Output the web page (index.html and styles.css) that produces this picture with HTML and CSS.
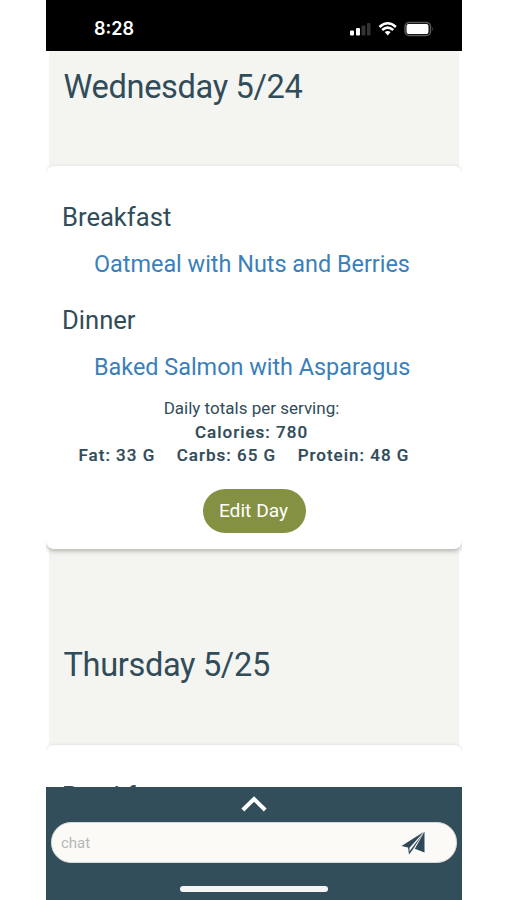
FILE: index.html
```html
<!DOCTYPE html>
<html lang="en">
<head>
    <meta charset="utf-8">
    <title>Meal Plan</title>
    <link rel="stylesheet" href="styles.css">
</head>
<body>
    <div class="phone">
        <header class="status-bar">
            <span class="time">8:28</span>
            <svg class="status-icons" width="86" height="16" viewBox="0 0 86 16">
                <g fill="#fff">
                    <rect x="2" y="9.500" width="4" height="5" rx="1"/>
                    <rect x="8" y="7" width="4" height="7.500" rx="1"/>
                    <rect x="13.500" y="4.500" width="4" height="10" rx="1" opacity=".2"/>
                    <rect x="19" y="2" width="3.500" height="12.500" rx="1" opacity=".2"/>
                    <path d="M36.700 11 L39.700 14.500 L42.700 11 Q39.700 9 36.700 11Z"/>
                    <rect x="58.500" y="3" width="22" height="10" rx="2"/>
                    <path d="M84.500 6 Q86 8 84.500 10Z" opacity=".45"/>
                </g>
                <g fill="none" stroke="#fff" stroke-width="2.500">
                    <path d="M31.500 6 Q39.700 -1.500 47.900 6"/>
                    <path d="M34.200 9 Q39.700 4.200 45.200 9"/>
                    <rect x="57" y="1.500" width="25.500" height="13" rx="4" stroke-width="1.500" opacity=".35"/>
                </g>
            </svg>
        </header>

        <main class="plan">
            <h1 class="first-day">Wednesday 5/24</h1>
            <section class="day-card">
                <h2>Breakfast</h2>
                <a class="meal-link">Oatmeal with Nuts and Berries</a>
                <h2 class="dinner">Dinner</h2>
                <a class="meal-link">Baked Salmon with Asparagus</a>
                <div class="totals">
                    <p>Daily totals per serving:</p>
                    <p class="bold">Calories: 780</p>
                    <div class="macros bold">
                        <span>Fat: 33 G</span>
                        <span>Carbs: 65 G</span>
                        <span>Protein: 48 G</span>
                    </div>
                </div>
                <button class="edit-btn">Edit Day</button>
            </section>
            <h1 class="next-day">Thursday 5/25</h1>
            <section class="day-card">
                <h2>Breakfast</h2>
            </section>
        </main>

        <footer class="chat-bar">
            <svg class="chevron" width="28" height="18" viewBox="0 0 28 18">
                <path d="M2.800 15 L14 4 L25.200 15" fill="none" stroke="#fff" stroke-width="4"/>
            </svg>
            <div class="chat-box">
                <span>chat</span>
                <svg width="24" height="24" viewBox="0 0 24 24" fill="#2f4858">
                    <path d="M.5 15 L23 .8 L8.500 16.800 L8.300 20.500 L22 2.500 L12 18.200 L8 23.500 L7 16.500Z"/>
                    <path d="M23.500 .5 V21.500 L13.800 17.800Z"/>
                </svg>
            </div>
            <div class="home-indicator"></div>
        </footer>
    </div>
</body>
</html>
```

FILE: styles.css
```css
* {box-sizing: border-box;}
body {
    margin: 0;
    background: #fff;
    color: #314c59;
    font-family: Roboto, sans-serif;
}
h1, h2, p {margin: 0; font-weight: 400;}
.phone {
    width: 416px;
    height: 900px;
    margin-left: 46px;
    display: flex;
    flex-direction: column;
    overflow: hidden;
}
.status-bar {
    flex: none;
    height: 51px;
    padding: 6px 28px 0 48px;
    display: flex;
    justify-content: space-between;
    align-items: center;
    background: #000;
    color: #fff;
}
.time {font: 600 18px Inter, sans-serif;}
.plan {
    flex: 1;
    min-height: 0;
    overflow: hidden;
    background: linear-gradient(#f4f4f1, #f4f4f1) 3px 0 / 410px 100% no-repeat;
}
h1 {
    padding-left: 17.5px;
    font-size: 32.6px;
    line-height: 40px;
    letter-spacing: -.35px;
}
.first-day {height: 115px; padding-top: 16px;}
.next-day {height: 196px; padding-top: 96px;}
.day-card {
    height: 383px;
    padding: 36px 16px 0;
    display: flex;
    flex-direction: column;
    background: #fff;
    border-radius: 8px;
    box-shadow: 0 2px 5px rgba(0, 0, 0, .28);
}
h2 {font-size: 25.6px; line-height: 30px;}
.dinner {margin-top: 26px;}
.meal-link {
    margin: 18px 0 0 32px;
    font-size: 23.4px;
    line-height: 29px;
    color: #3b7fba;
    white-space: nowrap;
}
.totals {
    margin: 15px 5px 0 0;
    font-size: 17px;
    line-height: 23.5px;
    text-align: center;
}
.bold {font-weight: 500; letter-spacing: 1px; -webkit-text-stroke: .2px;}
.macros {display: flex; gap: 21.5px; padding-left: 16.5px; white-space: nowrap;}
.edit-btn {
    width: 103px;
    height: 44px;
    margin: 21px auto 0 140.5px;
    padding: 0 1px 0 0;
    border: 0;
    border-radius: 22px;
    background: #849142;
    color: #fff;
    font: 19.2px Roboto, sans-serif;
}
.chat-bar {
    flex: none;
    height: 113px;
    padding: 8px 5px 0;
    display: flex;
    flex-direction: column;
    align-items: center;
    background: #334e5b;
}
.chevron {flex: none;}
.chat-box {
    width: 406px;
    height: 41px;
    margin-top: 9px;
    padding: 0 31px 0 9px;
    display: flex;
    justify-content: space-between;
    align-items: center;
    border: 1px solid #d3d8d8;
    border-radius: 20px;
    background: #fbfaf6;
    color: #b5b8b6;
    font-size: 15px;
}
.home-indicator {
    width: 148px;
    height: 6px;
    margin-top: 23px;
    border-radius: 3px;
    background: #f4f5f5;
}
```
